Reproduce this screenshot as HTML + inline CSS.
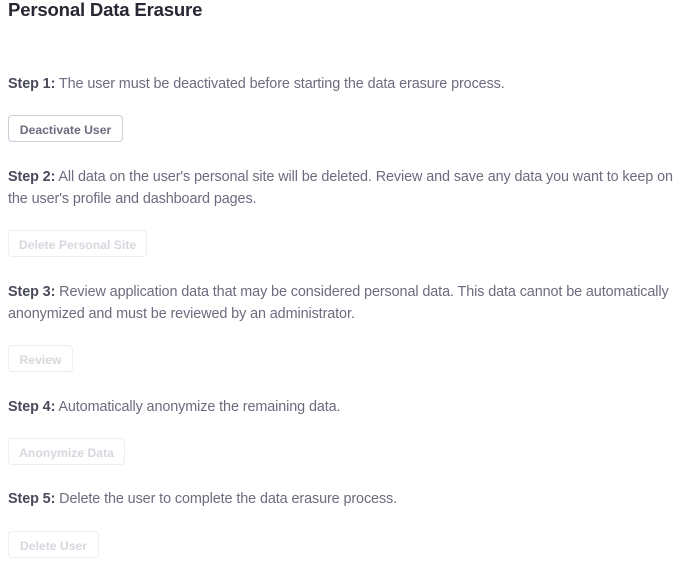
<!DOCTYPE html>
<html><head><style>
body{margin:0;width:680px;height:574px;background:#fff;font-family:"Liberation Sans",sans-serif;position:relative;overflow:hidden}
.a{position:absolute;left:8px}
h1{position:absolute;left:8px;top:-1px;margin:0;font-size:18.6px;font-weight:bold;color:#272833;letter-spacing:-0.2px}
p{margin:0;font-size:14.4px;line-height:22px;color:#6b6c7e;width:668px;letter-spacing:-0.1px}
p b{color:#494a5c}
.btn{height:25px;border:1px solid #cdced9;border-radius:4px;font-size:12.2px;font-weight:bold;color:#6b6c7e;line-height:28px;text-align:center;box-sizing:content-box}
.dis{border-color:#ededf2;color:#d7d7de}
</style></head><body>
<h1>Personal Data Erasure</h1>
<p class="a" style="top:73px"><b>Step 1:</b> The user must be deactivated before starting the data erasure process.</p>
<div class="a btn" style="top:115px;width:113px">Deactivate User</div>
<p class="a" style="top:166px"><b>Step 2:</b> All data on the user's personal site will be deleted. Review and save any data you want to keep on the user's profile and dashboard pages.</p>
<div class="a btn dis" style="top:230px;width:137px">Delete Personal Site</div>
<p class="a" style="top:281px"><b>Step 3:</b> Review application data that may be considered personal data. This data cannot be automatically anonymized and must be reviewed by an administrator.</p>
<div class="a btn dis" style="top:345px;width:63px">Review</div>
<p class="a" style="top:396px"><b>Step 4:</b> Automatically anonymize the remaining data.</p>
<div class="a btn dis" style="top:438px;width:115px">Anonymize Data</div>
<p class="a" style="top:488px"><b>Step 5:</b> Delete the user to complete the data erasure process.</p>
<div class="a btn dis" style="top:531px;width:89px">Delete User</div>
</body></html>
